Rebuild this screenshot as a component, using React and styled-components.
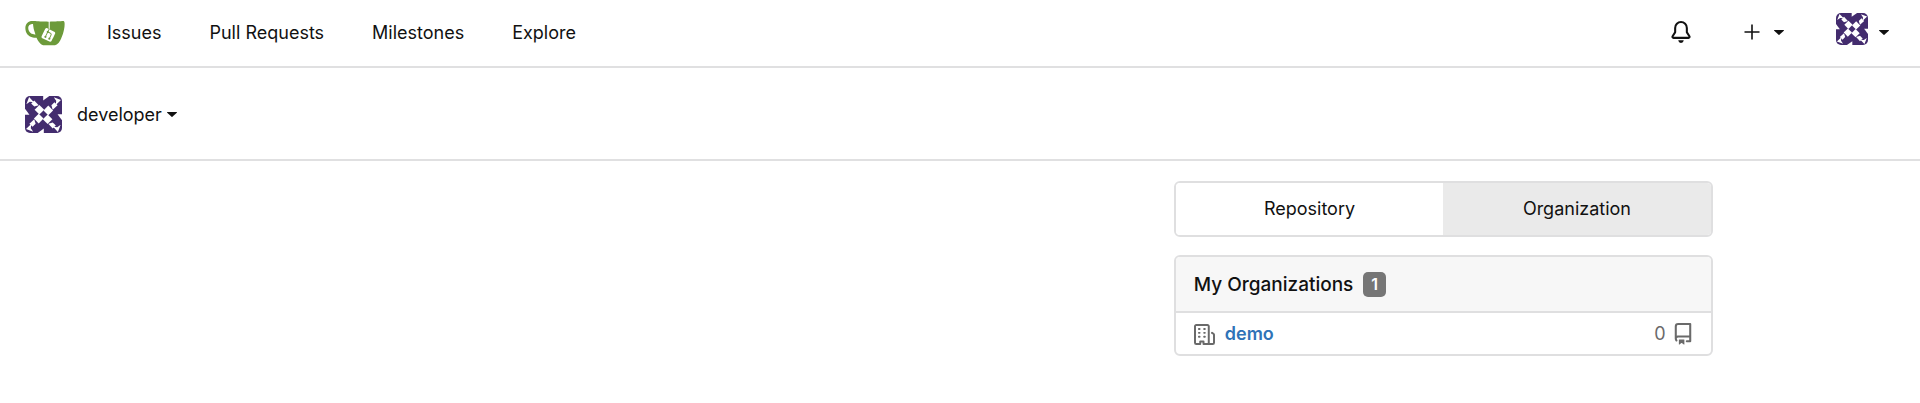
import React from "react";
import styled, { createGlobalStyle } from "styled-components";

const Global = createGlobalStyle`
  *, *::before, *::after { box-sizing: border-box; }
  body {
    margin: 0;
    background: #fff;
    color: #111;
    font-family: Inter, "Liberation Sans", sans-serif;
    font-size: 18px;
    line-height: 24px;
  }
  button { font: inherit; color: inherit; cursor: pointer; }
  a { color: inherit; text-decoration: none; }
`;

const TopBar = styled.header`
  display: flex;
  align-items: center;
  justify-content: space-between;
  height: 68px;
  padding: 0 31px 2px 25px;
  border-bottom: 2px solid #e0e0e1;
`;

const Nav = styled.nav`
  display: flex;
  align-items: center;
  gap: 48px;
`;

const HomeLink = styled.a`
  display: flex;
  margin-right: -6px;
`;

const NavLink = styled.a`
  padding-top: 2px;
`;

const Tools = styled.div`
  display: flex;
  align-items: center;
  gap: 52px;
`;

const PlainButton = styled.button`
  display: flex;
  align-items: center;
  gap: ${(p) => p.$gap || 0}px;
  padding: 0;
  border: 0;
  background: none;
`;

const ContextBar = styled.div`
  display: flex;
  align-items: center;
  height: 93px;
  padding: 2px 25px 0;
  border-bottom: 2px solid #e0e0e1;
`;

const ContextName = styled.span`
  margin: 0 5px 0 15px;
`;

const Main = styled.main`
  display: flex;
  justify-content: flex-end;
  padding: 20px 10.8% 48px;
`;

const SideColumn = styled.div`
  display: flex;
  flex-direction: column;
  gap: 18px;
  width: 35.8%;
  min-width: 360px;
`;

const Tabs = styled.div`
  display: flex;
  border: 2px solid #dfdfe0;
  border-radius: 6px;
  overflow: hidden;
`;

const Tab = styled.button`
  flex: 1;
  padding: 14px 0;
  border: 0;
  background: ${(p) => (p.$active ? "#eaeaea" : "#fff")};
  color: #111;
`;

const Panel = styled.section`
  border: 2px solid #dfdfe0;
  border-radius: 6px;
  overflow: hidden;
`;

const PanelHeader = styled.h2`
  display: flex;
  align-items: center;
  gap: 10px;
  margin: 0;
  padding: 15px 18px 14px;
  border-bottom: 2px solid #dfdfe0;
  background: #f7f7f7;
  font-size: 19px;
  font-weight: 500;
`;

const Count = styled.span`
  padding: 0 8px;
  border-radius: 5px;
  background: #767676;
  color: #fff;
  font-size: 16px;
  font-weight: 600;
  line-height: 25px;
`;

const List = styled.ul`
  margin: 0;
  padding: 0;
  list-style: none;
`;

const Row = styled.li`
  display: flex;
  align-items: center;
  gap: 10px;
  padding: 9px 17px 8px 18px;
  color: #6a6a6a;
`;

const OrgLink = styled.a`
  flex: 1;
  color: #2f73b7;
  font-weight: 600;
`;

const RepoCount = styled.span`
  display: flex;
  align-items: center;
  gap: 6px;
`;

const Icon = styled.svg`
  display: block;
  flex: none;
  fill: currentColor;
`;

function Logo() {
  return (
    <Icon width="40" height="40" viewBox="0 0 640 640" aria-hidden="true">
      <path fill="#fff" d="M395.9,484.2l-126.9-61c-12.5-6-17.9-21.2-11.8-33.8l61-126.9c6-12.5,21.2-17.9,33.8-11.8c17.2,8.3,27.1,13,27.1,13l-0.1-109.2l16.7-0.1l0.1,117.1c0,0,57.4,24.2,83.1,40.1c3.7,2.3,10.2,6.8,12.9,14.4c2.1,6.1,2,13.1-1,19.3l-61,126.9C423.6,484.9,408.4,490.3,395.9,484.2z" />
      <path fill="#6c9a3a" d="M622.7,149.8c-4.1-4.1-9.6-4-9.6-4s-117.2,6.6-177.9,8c-13.3,0.3-26.5,0.6-39.6,0.7c0,39.1,0,78.2,0,117.2c-5.5-2.6-11.1-5.3-16.6-7.9c0-36.4-0.1-109.2-0.1-109.2c-29,0.4-89.2-2.2-89.2-2.2s-141.4-7.1-156.8-8.5c-9.8-0.6-22.5-2.1-39,1.5c-8.7,1.8-33.5,7.4-53.8,26.9C-4.9,212.4,6.6,276.2,8,285.8c1.7,11.7,6.9,44.2,31.7,72.5c45.8,56.1,144.4,54.8,144.4,54.8s12.1,28.9,30.6,55.5c25,33.1,50.7,58.9,75.7,62c63,0,188.9-0.1,188.9-0.1s12,0.1,28.3-10.3c14-8.5,26.5-23.4,26.5-23.4s12.9-13.8,30.9-45.3c5.5-9.7,10.1-19.1,14.1-28c0,0,55.2-117.1,55.2-231.1C633.2,157.9,624.7,151.8,622.7,149.8z M125.6,353.9c-25.9-8.5-36.9-18.7-36.9-18.7S69.6,321.8,60,295.4c-16.5-44.2-1.4-71.2-1.4-71.2s8.4-22.5,38.5-30c13.8-3.7,31-3.1,31-3.1s7.1,59.4,15.7,94.2c7.2,29.2,24.8,77.7,24.8,77.7S142.5,359.9,125.6,353.9z M425.9,461.5c0,0-6.1,14.5-19.6,15.4c-5.8,0.4-10.3-1.2-10.3-1.2s-0.3-0.1-5.3-2.1l-112.9-55c0,0-10.9-5.7-12.8-15.6c-2.2-8.1,2.7-18.1,2.7-18.1L322,273c0,0,4.8-9.7,12.2-13c0.6-0.3,2.3-1,4.5-1.5c8.1-2.1,18,2.8,18,2.8l110.7,53.7c0,0,12.6,5.7,15.3,16.2c1.9,7.4-0.5,14-1.8,17.2C474.6,363.8,425.9,461.5,425.9,461.5z" />
      <path fill="#6c9a3a" d="M326.8,380.1c-8.2,0.1-15.4,5.8-17.3,13.8c-1.9,8,2,16.3,9.1,20c7.7,4,17.5,1.8,22.7-5.4c5.1-7.1,4.3-16.9-1.8-23.1l24-49.1c1.5,0.1,3.7,0.2,6.2-0.5c4.1-0.9,7.1-3.6,7.1-3.6c4.2,1.8,8.6,3.8,13.2,6.1c4.8,2.4,9.3,4.9,13.4,7.3c0.9,0.5,1.8,1.1,2.8,1.9c1.6,1.3,3.4,3.1,4.7,5.5c1.9,5.5-1.9,14.9-1.9,14.9c-2.3,7.6-18.4,40.6-18.4,40.6c-8.1-0.2-15.3,5-17.7,12.5c-2.6,8.1,1.1,17.3,8.9,21.3c7.8,4,17.4,1.7,22.5-5.3c5-6.8,4.6-16.3-1.1-22.6c1.9-3.7,3.7-7.4,5.6-11.3c5-10.4,13.5-30.4,13.5-30.4c0.9-1.7,5.7-10.3,2.7-21.3c-2.5-11.4-12.6-16.7-12.6-16.7c-12.2-7.9-29.2-15.2-29.2-15.2s0-4.1-1.1-7.1c-1.1-3.1-2.8-5.1-3.9-6.3c4.7-9.7,9.4-19.3,14.1-29c-4.1-2-8.1-4-12.2-6.1c-4.8,9.8-9.7,19.7-14.5,29.5c-6.7-0.1-12.9,3.5-16.1,9.4c-3.4,6.3-2.7,14.1,1.9,19.8L326.8,380.1z" />
    </Icon>
  );
}

const AvatarBox = styled(Icon)`
  border-radius: 5px;
`;

const RaisedAvatar = styled.span`
  padding-bottom: 6px;
`;

function Avatar({ size }) {
  return (
    <AvatarBox width={size} height={size} viewBox="0 0 108 108" aria-hidden="true">
      <path fill="#432c6e" d="M0 0h108v108H0z" />
      {[0, 90, 180, 270].map((turn) => (
        <g key={turn} transform={`rotate(${turn} 54 54)`} fill="#fff">
          <path d="M42 26L56 40L42 54L28 40Z" />
          <path d="M53 0H71L53 13Z" />
          <path d="M12 3L26 18L14 17L4 24Z" />
          <path d="M27 13L40 27L27 31L18 22Z" />
        </g>
      ))}
    </AvatarBox>
  );
}

const Bell = () => (
  <Icon width="22" height="22" viewBox="0 0 16 16" aria-hidden="true">
    <path d="M8 16a2 2 0 001.985-1.75c.017-.137-.097-.25-.235-.25h-3.5c-.138 0-.252.113-.235.25A2 2 0 008 16z" />
    <path fillRule="evenodd" d="M8 1.5A3.5 3.5 0 004.5 5v2.947c0 .346-.102.683-.294.97l-1.703 2.556a.018.018 0 00-.003.01l.001.006c0 .002.002.004.004.006a.017.017 0 00.006.004l.007.001h10.964l.007-.001a.016.016 0 00.006-.004.016.016 0 00.004-.006l.001-.007a.017.017 0 00-.003-.01l-1.703-2.554a1.75 1.75 0 01-.294-.97V5A3.5 3.5 0 008 1.5zM3 5a5 5 0 0110 0v2.947c0 .05.015.098.042.139l1.703 2.555A1.518 1.518 0 0113.482 13H2.518a1.518 1.518 0 01-1.263-2.36l1.703-2.554A.25.25 0 003 7.947V5z" />
  </Icon>
);

const Plus = () => (
  <Icon width="16" height="16" viewBox="0 0 16 16" aria-hidden="true">
    <path d="M7.2 .5h1.6v6.7h6.7v1.6H8.8v6.7H7.2V8.8H.5V7.2h6.7z" />
  </Icon>
);

const Caret = () => (
  <Icon width="10" height="5" viewBox="0 0 10 5" aria-hidden="true">
    <path d="M.5 0h9c.4 0 .6.4.3.7L5.4 4.8a.6.6 0 01-.8 0L.2.7C-.1.4.1 0 .5 0z" />
  </Icon>
);

const Building = () => (
  <Icon width="21" height="21" viewBox="0 0 16 16" aria-hidden="true">
    <path fillRule="evenodd" d="M1.5 14.25c0 .138.112.25.25.25H4v-1.25a.75.75 0 01.75-.75h2.5a.75.75 0 01.75.75v1.25h2.25a.25.25 0 00.25-.25V1.75a.25.25 0 00-.25-.25h-8.5a.25.25 0 00-.25.25v12.5zM1.75 16A1.75 1.75 0 010 14.25V1.75C0 .784.784 0 1.75 0h8.5C11.216 0 12 .784 12 1.75v12.5c0 .085-.006.168-.018.25h2.268a.25.25 0 00.25-.25V8.285a.25.25 0 00-.111-.208l-1.055-.703a.75.75 0 11.832-1.248l1.055.703c.487.325.779.871.779 1.456v5.965A1.75 1.75 0 0114.25 16h-3.5a.75.75 0 01-.197-.026c-.099.017-.2.026-.303.026h-3a.75.75 0 01-.75-.75V14h-1v1.25a.75.75 0 01-.75.75h-3zM3 3.75A.75.75 0 013.75 3h.5a.75.75 0 010 1.5h-.5A.75.75 0 013 3.75zM3.75 6a.75.75 0 000 1.5h.5a.75.75 0 000-1.5h-.5zM3 9.75A.75.75 0 013.75 9h.5a.75.75 0 010 1.5h-.5A.75.75 0 013 9.75zM7.75 9a.75.75 0 000 1.5h.5a.75.75 0 000-1.5h-.5zM7 6.75A.75.75 0 017.75 6h.5a.75.75 0 010 1.5h-.5A.75.75 0 017 6.75zM7.75 3a.75.75 0 000 1.5h.5a.75.75 0 000-1.5h-.5z" />
  </Icon>
);

const Repo = () => (
  <Icon width="22" height="22" viewBox="0 0 16 16" aria-hidden="true">
    <path fillRule="evenodd" d="M2 2.5A2.5 2.5 0 014.5 0h8.75a.75.75 0 01.75.75v12.5a.75.75 0 01-.75.75h-2.5a.75.75 0 110-1.5h1.75v-2h-8a1 1 0 00-.714 1.7.75.75 0 01-1.072 1.05A2.495 2.495 0 012 11.5v-9zm10.5-1V9h-8c-.356 0-.694.074-1 .208V2.5a1 1 0 011-1h8zM5 12.25v3.25a.25.25 0 00.4.2l1.45-1.087a.25.25 0 01.3 0L8.6 15.7a.25.25 0 00.4-.2v-3.25a.25.25 0 00-.25-.25h-3.5a.25.25 0 00-.25.25z" />
  </Icon>
);

export default function App() {
  return (
    <>
      <Global />
      <TopBar>
        <Nav aria-label="Main">
          <HomeLink href="#" aria-label="Home"><Logo /></HomeLink>
          <NavLink href="#issues">Issues</NavLink>
          <NavLink href="#pulls">Pull Requests</NavLink>
          <NavLink href="#milestones">Milestones</NavLink>
          <NavLink href="#explore">Explore</NavLink>
        </Nav>
        <Tools>
          <PlainButton aria-label="Notifications"><Bell /></PlainButton>
          <PlainButton $gap={14} aria-label="Create"><Plus /><Caret /></PlainButton>
          <PlainButton $gap={11} aria-label="Profile">
            <RaisedAvatar><Avatar size={32} /></RaisedAvatar>
            <Caret />
          </PlainButton>
        </Tools>
      </TopBar>
      <ContextBar>
        <PlainButton>
          <Avatar size={37} />
          <ContextName>developer</ContextName>
          <Caret />
        </PlainButton>
      </ContextBar>
      <Main>
        <SideColumn>
          <Tabs>
            <Tab>Repository</Tab>
            <Tab $active>Organization</Tab>
          </Tabs>
          <Panel>
            <PanelHeader>My Organizations <Count>1</Count></PanelHeader>
            <List>
              <Row>
                <Building />
                <OrgLink href="#demo">demo</OrgLink>
                <RepoCount>0 <Repo /></RepoCount>
              </Row>
            </List>
          </Panel>
        </SideColumn>
      </Main>
    </>
  );
}
